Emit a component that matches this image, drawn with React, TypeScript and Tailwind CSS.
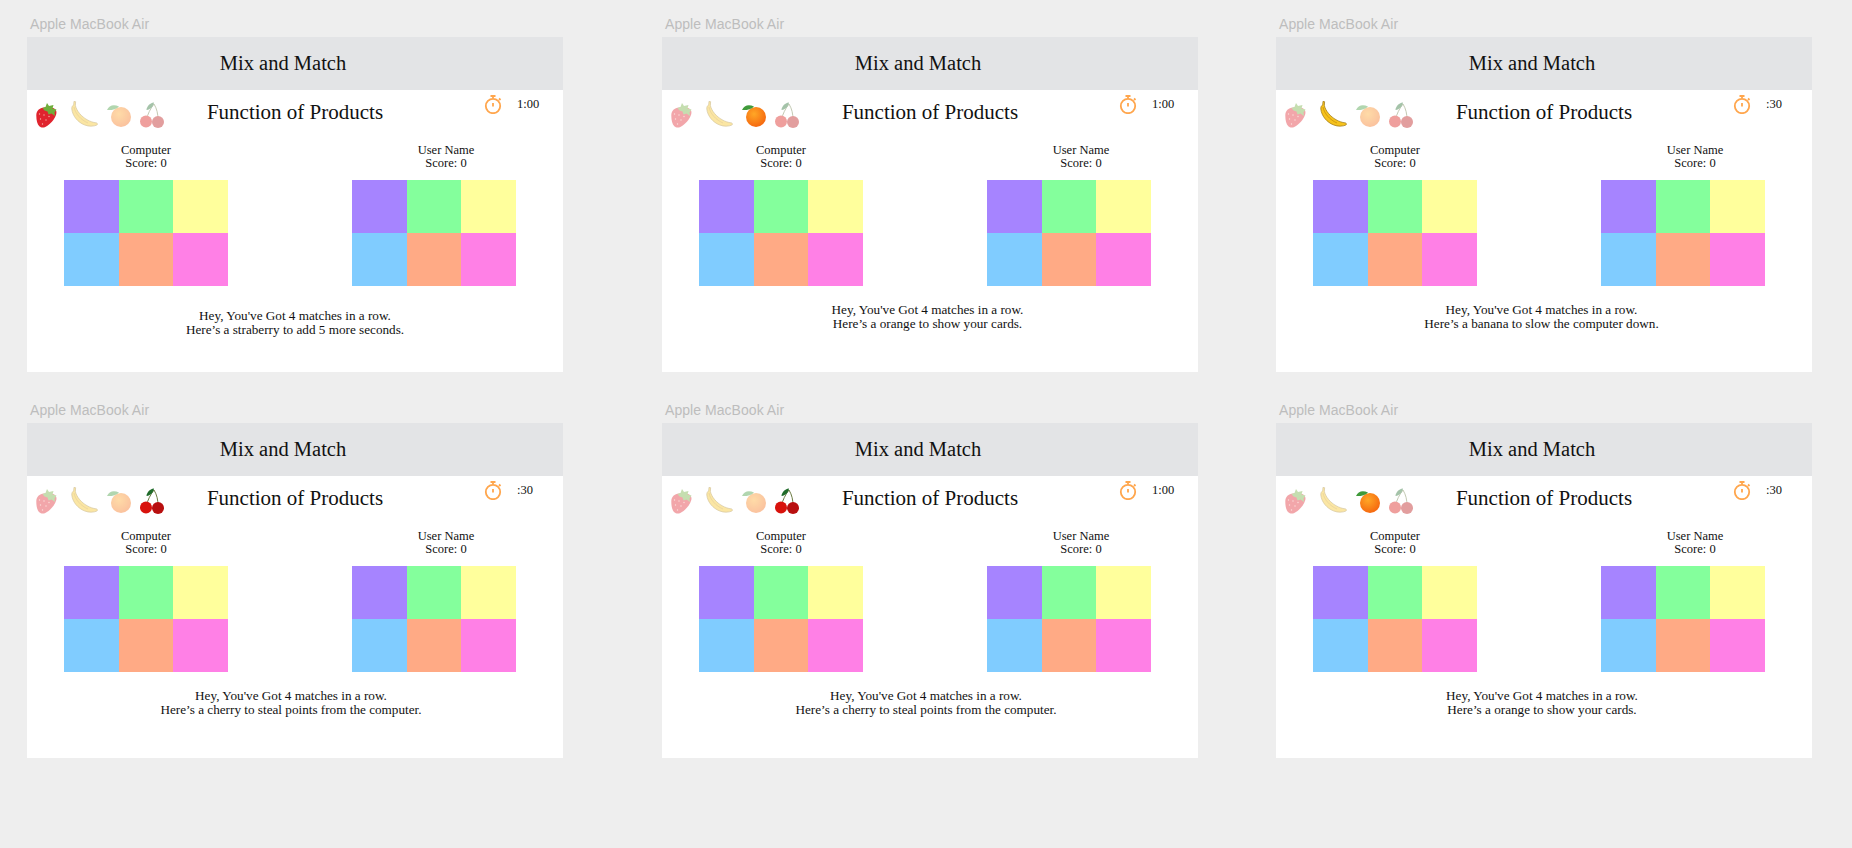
import React from 'react';

type FruitName = 'strawberry' | 'banana' | 'orange' | 'cherry';

interface ScreenProps {
    active: FruitName;
    time: string;
    line: string;
    /** message position differs a little from frame to frame */
    messageClass?: string;
}

const Strawberry: React.FC<{ className: string }> = ({ className }) => (
    <svg viewBox="0 0 21 25" className={className}>
        <path d="M8 4.500C3.500 5 .3 7.500.3 12.500c0 5 1 9 3 10.800 1.600 1.500 4 1.700 6 .7 4.500-2.200 9.500-7.500 11-13 .7-3-.5-5-3-6-3-1-7-1.500-9.300-.5z" fill="#e0242e" />
        <path d="M6.500 5l3-1 1.500-4 2 3 4.500-1-1 3.500 4 1-2 3 .5 3.500-3.500-2.500-3 1-1-3-3-1z" fill="#6fae3c" />
        <g fill="#f7b0a8">
            <circle cx="3.500" cy="11" r=".7" />
            <circle cx="8" cy="12" r=".7" />
            <circle cx="13" cy="13.500" r=".7" />
            <circle cx="4.500" cy="16" r=".7" />
            <circle cx="10" cy="17" r=".7" />
            <circle cx="6.500" cy="21" r=".7" />
        </g>
    </svg>
);

const Banana: React.FC<{ className: string }> = ({ className }) => (
    <svg viewBox="0 0 27 26" className={className}>
        <path d="M3 .3l1.600.4-.2 4c1.400 5.500 6 10.800 11.600 14 3 1.700 6 2.800 9.500 3.200 1.200.5 1.200 1.600.3 2.200-3 1.300-8 1.600-12-.1C7 21.500 1.500 15 .8 8c-.2-2 .8-3.500 1.900-4.200z" fill="#f6c21c" stroke="#9a7414" strokeWidth=".7" />
        <path d="M3 6c1 6.500 7 13 14 16" fill="none" stroke="#c8920e" strokeWidth=".8" />
    </svg>
);

const Orange: React.FC<{ className: string }> = ({ className }) => (
    <svg viewBox="0 0 24 23" className={className}>
        <defs>
            <radialGradient id="orangeFill" cx="0.4" cy="0.35" r="0.75">
                <stop offset="0" stopColor="#ffa726" />
                <stop offset="1" stopColor="#f4600c" />
            </radialGradient>
        </defs>
        <circle cx="14" cy="13" r="10" fill="url(#orangeFill)" />
        <path d="M0 6C2 1 7 0 12 2.500 9 5.500 4 6.500 0 6z" fill="#3f9a3a" />
    </svg>
);

const Cherry: React.FC<{ className: string }> = ({ className }) => (
    <svg viewBox="0 0 24 26" className={className}>
        <path d="M6 18C8 12 10 7 14 2M18 18C18 12 17 7 14 2" fill="none" stroke="#5a6b2c" strokeWidth=".9" />
        <path d="M6.500 8c0-3 3-7 7.500-7.500-.5 3.500-3 7-7.500 7.500z" fill="#1f6b2a" />
        <circle cx="6" cy="19.500" r="6" fill="#d8120c" />
        <circle cx="18" cy="20" r="6" fill="#b80f0f" />
    </svg>
);

const Fruits: React.FC<{ active: FruitName }> = ({ active }) => {
    const fade = (name: FruitName) => (active === name ? '' : 'opacity-40');
    return (
        <div className="flex items-start gap-[9px] pl-[9px] pt-[11px]">
            <Strawberry className={`mr-[5px] mt-[2px] h-[25px] w-[21px] ${fade('strawberry')}`} />
            <Banana className={`h-[26px] w-[27px] ${fade('banana')}`} />
            <Orange className={`mt-[3px] h-[23px] w-[24px] ${fade('orange')}`} />
            <Cherry className={`mt-[1px] h-[26px] w-[24px] ${fade('cherry')}`} />
        </div>
    );
};

const Stopwatch: React.FC = () => (
    <svg viewBox="0 0 18 19" className="h-[19px] w-[18px]" fill="none" stroke="#ffa64d" strokeWidth="1.800">
        <circle cx="9" cy="11" r="7.200" />
        <path d="M6.500 1h5M9 1v2.500M15 3.500l1.500 1.500M9 8v3.500" />
    </svg>
);

const swatches = ['bg-[#a684ff]', 'bg-[#84ff9c]', 'bg-[#ffff9c]', 'bg-[#80ccff]', 'bg-[#ffaa85]', 'bg-[#ff80e6]'];

const Board: React.FC<{ name: string; labelClass?: string }> = ({ name, labelClass = '' }) => (
    <div className="w-[164px]">
        <div className={`text-center text-[12.500px] leading-[13px] ${labelClass}`}>
            <div className="whitespace-nowrap">{name}</div>
            <div>Score: 0</div>
        </div>
        <div className="mt-[10px] grid h-[106px] grid-cols-3 grid-rows-2">
            {swatches.map((swatch) => (
                <div key={swatch} className={swatch} />
            ))}
        </div>
    </div>
);

const Screen: React.FC<ScreenProps> = ({ active, time, line, messageClass = 'mt-[17px] pr-[5px]' }) => (
    <div className="w-[536px]">
        <div className="h-[19px] pl-[3px] font-['Liberation_Sans',sans-serif] text-[14px] leading-[13px] tracking-[0.05px] text-[#bdbdbd]">
            Apple MacBook Air
        </div>
        <div className="h-[335px] bg-white text-[#111]">
            <div className="flex h-[53px] items-center justify-center bg-[#e3e4e6] pr-[24px] text-[20.500px]">
                Mix and Match
            </div>
            <div className="grid h-[38px] grid-cols-[1fr_auto_1fr]">
                <Fruits active={active} />
                <div className="whitespace-nowrap pt-[10px] text-[21px] leading-[24px]">Function of Products</div>
                <div className="flex items-start gap-[15px] pl-[101px] pt-[5px]">
                    <Stopwatch />
                    <span className="text-[12.500px] leading-[19px]">{time}</span>
                </div>
            </div>
            <div className="mt-[16px] flex gap-[124px] pl-[37px]">
                <Board name="Computer" />
                <Board name="User Name" labelClass="pl-[24px]" />
            </div>
            <div className={`text-center text-[13.200px] leading-[14px] ${messageClass}`}>
                <div>Hey, You've Got 4 matches in a row.</div>
                <div>{line}</div>
            </div>
        </div>
    </div>
);

export default function App() {
    return (
        <div className="h-[848px] w-[1852px] overflow-hidden bg-[#eeeeee] pl-[27px] pt-[18px] font-['Liberation_Serif',serif]">
            <div className="flex">
                <Screen active="strawberry" time="1:00" line="Here’s a straberry to add 5 more seconds." messageClass="mt-[23px]" />
                <div className="ml-[99px]">
                    <Screen active="orange" time="1:00" line="Here’s a orange to show your cards." />
                </div>
                <div className="ml-[78px]">
                    <Screen active="banana" time=":30" line="Here’s a banana to slow the computer down." />
                </div>
            </div>
            <div className="mt-[32px] flex">
                <Screen active="cherry" time=":30" line="Here’s a cherry to steal points from the computer." messageClass="mt-[17px] pr-[8px]" />
                <div className="ml-[99px]">
                    <Screen active="cherry" time="1:00" line="Here’s a cherry to steal points from the computer." messageClass="mt-[17px] pr-[8px]" />
                </div>
                <div className="ml-[78px]">
                    <Screen active="orange" time=":30" line="Here’s a orange to show your cards." messageClass="mt-[17px] pr-[4px]" />
                </div>
            </div>
        </div>
    );
}
